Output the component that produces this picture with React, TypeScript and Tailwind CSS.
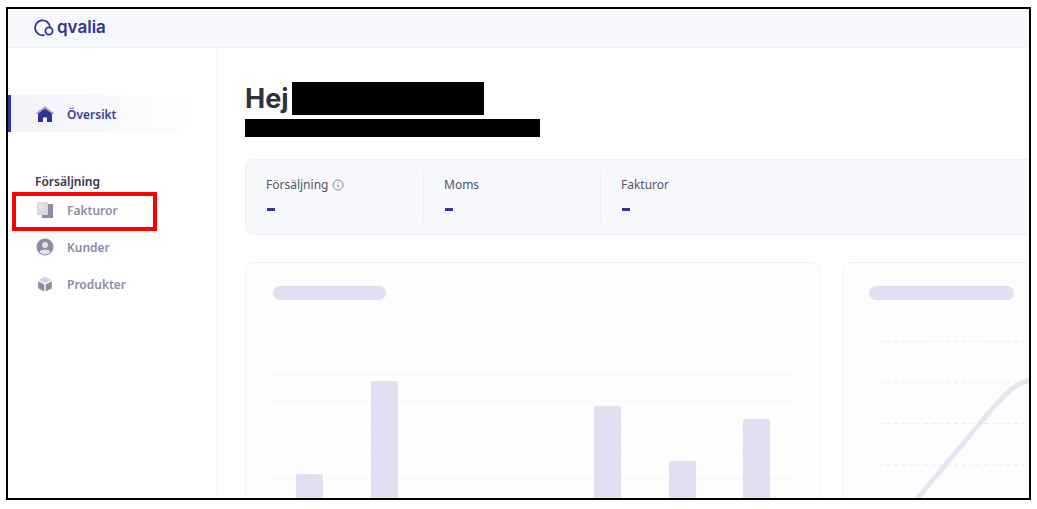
const font = "font-['Noto_Sans','Liberation_Sans',sans-serif]"

function NavItem({ icon, label }: { icon: React.ReactNode; label: string }) {
  return (
    <div className="h-[37px] flex items-center pl-[28px]">
      <div className="w-[31px] flex items-center">{icon}</div>
      <span className="pt-[2px] text-[12px] font-semibold text-[#8b8ca3]">{label}</span>
    </div>
  )
}

function Logo() {
  return (
    <svg width="20" height="18" viewBox="0 0 20 18" fill="none" stroke="#2f3590" strokeWidth="1.8">
      <path d="M9.8 16.2 A7.5 7.5 0 1 1 16 7.6" strokeLinecap="round" />
      <circle cx="15" cy="12" r="3.6" />
    </svg>
  )
}

function HomeIcon() {
  return (
    <svg width="18" height="18" viewBox="0 0 18 18">
      <path d="M9 1 L18 8 L16.5 9 L9 3.5 L1.5 9 L0 8 Z" fill="#a9abd0" />
      <path d="M9 3.5 L16 8.6 V17 H11 V12.5 H7 V17 H2 V8.6 Z" fill="#2f3590" />
    </svg>
  )
}

function InvoiceIcon() {
  return (
    <svg width="18" height="18" viewBox="0 0 18 18">
      <rect x="6" y="3" width="11" height="14" fill="#8b8ca3" />
      <rect x="1" y="1" width="11" height="13" fill="#d9d9e2" />
      <rect x="3" y="3.5" width="5" height="1.2" fill="#f5f5f8" />
      <rect x="3" y="6" width="3" height="1.2" fill="#f5f5f8" />
    </svg>
  )
}

function CustomerIcon() {
  return (
    <svg width="18" height="18" viewBox="0 0 18 18">
      <circle cx="9" cy="9" r="8.5" fill="#8b8ca3" />
      <circle cx="9" cy="7" r="3" fill="#e4e4ec" />
      <path d="M3.6 14 C5 10.8 13 10.8 14.4 14 A7 7 0 0 1 3.6 14 Z" fill="#e4e4ec" />
    </svg>
  )
}

function ProductIcon() {
  return (
    <svg width="18" height="18" viewBox="0 0 18 18">
      <path d="M9 1.5 L15.5 5 L9 8.2 L2.5 5 Z" fill="#d3d3de" />
      <path d="M2.2 6.3 L8.3 9.4 V16.5 L2.2 13.2 Z" fill="#8b8ca3" />
      <path d="M15.8 6.3 L9.7 9.4 V16.5 L15.8 13.2 Z" fill="#8b8ca3" />
    </svg>
  )
}

function Stat({ label, info, className }: { label: string; info?: boolean; className: string }) {
  return (
    <div className={`${className} shrink-0 h-[50px] pl-[20px] pt-[3px]`}>
      <div className="flex items-center gap-[4px] h-[20px] text-[12px] text-[#55566a]">
        {label}
        {info && (
          <svg width="12" height="12" viewBox="0 0 12 12" fill="none" stroke="#77788c" strokeWidth="0.9">
            <circle cx="6" cy="6" r="5" />
            <path d="M6 5.4 V8.8 M6 3.2 V4.2" />
          </svg>
        )}
      </div>
      <div className="mt-[13px] w-[8px] h-[3px] ml-[1px] bg-[#2f3590]" />
    </div>
  )
}

function BarChart() {
  const bars = [
    { x: 23, top: 474 },
    { x: 98, top: 381 },
    { x: 321, top: 406 },
    { x: 396, top: 461 },
    { x: 470, top: 419 }
  ]
  return (
    <svg width="522" height="136" viewBox="0 0 522 136">
      {[375, 401, 427, 453, 479].map(y => (
        <line key={y} x1="0" x2="522" y1={y - 372} y2={y - 372} stroke="#ededf1" strokeWidth="1.2" strokeDasharray="2 2" />
      ))}
      {bars.map(b => (
        <path
          key={b.x}
          d={`M${b.x} 136 V${b.top - 370} a2 2 0 0 1 2 -2 H${b.x + 25} a2 2 0 0 1 2 2 V136 Z`}
          fill="#e0e0f2"
        />
      ))}
    </svg>
  )
}

function LineChart() {
  return (
    <svg width="151" height="162" viewBox="0 0 151 162">
      {[5.5, 46.5, 87.5, 129].map(y => (
        <line key={y} x1="0" x2="151" y1={y} y2={y} stroke="#ebebf0" strokeWidth="1.2" strokeDasharray="4 3.5" />
      ))}
      <path d="M38 163 L102 86 C122 62 136 46 151 44.5" fill="none" stroke="#e6e6f3" strokeWidth="5" />
    </svg>
  )
}

export default function App() {
  return (
    <div className={`${font} relative w-[1037px] h-[509px] bg-white pl-[6px] pt-[7px] overflow-hidden`}>
      <div className="w-[1025px] h-[493px] border-2 border-black overflow-hidden flex flex-col bg-white">
        <header className="h-[39px] shrink-0 bg-[#f7f8fc] border-b border-[#eff0f6] flex items-center pl-[26px] gap-[3px]">
          <Logo />
          <span className="font-['Inter',sans-serif] text-[17px] font-semibold leading-none text-[#2f3590] pb-[2px]">
            qvalia
          </span>
        </header>

        <div className="flex flex-1 min-h-0">
          <aside className="w-[210px] shrink-0 border-r border-[#f0f1f5] pt-[47px]">
            <div className="h-[37px] flex items-center pl-[25px] border-l-[3px] border-[#2f3590] w-[198px] bg-gradient-to-r from-[#f2f2f9] to-white">
              <div className="w-[31px] flex items-center">
                <HomeIcon />
              </div>
              <span className="pt-[2px] text-[12px] font-semibold text-[#3b3f93]">Översikt</span>
            </div>
            <div className="mt-[41px] pl-[27px] text-[12px] font-semibold leading-[18px] text-[#333445]">Försäljning</div>
            <div>
              <NavItem icon={<InvoiceIcon />} label="Fakturor" />
              <NavItem icon={<CustomerIcon />} label="Kunder" />
              <NavItem icon={<ProductIcon />} label="Produkter" />
            </div>
          </aside>

          <main className="flex-1 min-w-0 pl-[27px] pt-[34px] overflow-hidden">
            <div className="h-[33px] flex items-center">
              <h1 className="w-[47px] font-['Inter',sans-serif] text-[27px] font-bold leading-none text-[#2f3140]">Hej</h1>
              <div className="w-[192px] h-[33px] bg-black" />
            </div>
            <div className="mt-[4px] w-[295px] h-[18px] bg-black" />

            <div className="mt-[22px] w-[900px] h-[76px] bg-[#f7f8fc] border border-[#eff0f5] rounded-[8px] flex items-center">
              <Stat label="Försäljning" info className="w-[178px] border-r border-[#eceef4]" />
              <Stat label="Moms" className="w-[177px] border-r border-[#eceef4]" />
              <Stat label="Fakturor" className="w-[177px]" />
            </div>

            <div className="mt-[27px] flex gap-[21px]">
              <div className="w-[576px] h-[300px] shrink-0 bg-[#fdfdfe] border border-[#f1f1f5] rounded-[8px] pl-[27px] pt-[23px]">
                <div className="w-[113px] h-[14px] rounded-full bg-[#e0e0f2]" />
                <div className="mt-[72px]">
                  <BarChart />
                </div>
              </div>
              <div className="w-[300px] h-[300px] shrink-0 bg-[#fdfdfe] border border-[#f1f1f5] rounded-[8px] pl-[26px] pt-[23px]">
                <div className="w-[145px] h-[14px] rounded-full bg-[#e0e0f2]" />
                <div className="mt-[36px] ml-[10px]">
                  <LineChart />
                </div>
              </div>
            </div>
          </main>
        </div>
      </div>
      <div className="absolute left-[12px] top-[192px] w-[145px] h-[39px] border-[4px] border-[#ff0000]" />
    </div>
  )
}
